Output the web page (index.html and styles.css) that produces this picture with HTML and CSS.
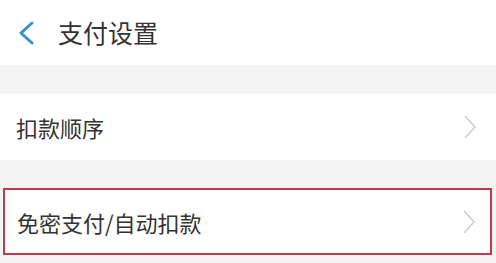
FILE: index.html
```html
<!DOCTYPE html>
<html lang="zh-CN">
<head>
<meta charset="utf-8">
<link rel="stylesheet" href="styles.css">
</head>
<body>
<header class="header">
  <svg class="back" width="18" height="24" viewBox="0 0 18 24"><path d="M15 2 L4 12 L15 22" fill="none" stroke="#3a8fd2" stroke-width="3" stroke-linecap="round" stroke-linejoin="round"/></svg>
  <h1 class="title">支付设置</h1>
</header>
<div class="gap gap1"></div>
<div class="row row1">
  <span class="label">扣款顺序</span>
  <svg class="arrow" width="14" height="26" viewBox="0 0 14 26"><path d="M2 2 L12 13 L2 24" fill="none" stroke="#cdcdcd" stroke-width="1.6"/></svg>
</div>
<div class="gap gap2"></div>
<div class="row row2">
  <span class="label">免密支付/自动扣款</span>
  <svg class="arrow" width="14" height="26" viewBox="0 0 14 26"><path d="M2 2 L12 13 L2 24" fill="none" stroke="#cdcdcd" stroke-width="1.6"/></svg>
</div>
</body>
</html>
```
FILE: styles.css
```css
html, body {
  margin: 0;
  padding: 0;
}
body {
  width: 496px;
  height: 263px;
  overflow: hidden;
  background: #f4f4f4;
  font-family: "Noto Sans CJK SC", "Noto Sans", sans-serif;
  color: #333;
}
.header {
  height: 65px;
  background: #fff;
  display: flex;
  align-items: center;
  padding-left: 17px;
  box-sizing: border-box;
}
.back {
  display: block;
  margin-top: 1px;
}
.title {
  margin: 0 0 0 23px;
  font-size: 25px;
  font-weight: normal;
  line-height: 1;
  color: #333;
}
.gap1 { height: 29px; }
.gap2 { height: 28px; }
.row {
  background: #fff;
  display: flex;
  align-items: center;
  justify-content: space-between;
  box-sizing: border-box;
}
.row1 {
  height: 66px;
  padding: 0 19px 0 16px;
}
.row2 {
  height: 67px;
  margin: 0 4px 0 3px;
  border: 2.5px solid #c03a48;
  padding: 0 14px 0 12px;
}
.label {
  font-size: 22px;
  line-height: 1;
  color: #333;
}
.arrow {
  display: block;
}
```
